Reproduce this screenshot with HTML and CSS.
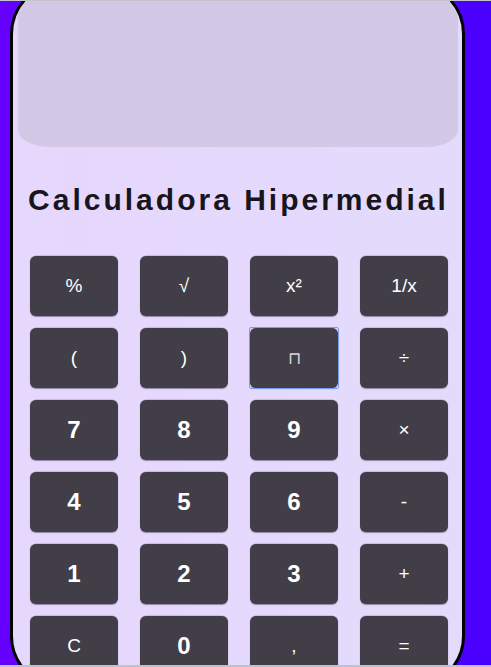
FILE: index.html
```html
<!DOCTYPE html>
<html lang="pt">
<head>
<meta charset="utf-8">
<title>Calculadora Hipermedial</title>
<link rel="stylesheet" href="styles.css">
</head>
<body>
<div class="frame">
  <div class="calc">
    <div class="display"></div>
    <h1 class="title">Calculadora Hipermedial</h1>
    <div class="keys">
      <button class="key op">%</button>
      <button class="key op">√</button>
      <button class="key op">x²</button>
      <button class="key op">1/x</button>
      <button class="key op">(</button>
      <button class="key op">)</button>
      <button class="key op thin focused">⊓</button>
      <button class="key op">÷</button>
      <button class="key num">7</button>
      <button class="key num">8</button>
      <button class="key num">9</button>
      <button class="key op">×</button>
      <button class="key num">4</button>
      <button class="key num">5</button>
      <button class="key num">6</button>
      <button class="key op">-</button>
      <button class="key num">1</button>
      <button class="key num">2</button>
      <button class="key num">3</button>
      <button class="key op">+</button>
      <button class="key op">C</button>
      <button class="key num">0</button>
      <button class="key op">,</button>
      <button class="key op">=</button>
    </div>
  </div>
</div>
</body>
</html>
```
FILE: styles.css
```css
html, body {
  margin: 0;
  padding: 0;
}
body {
  background: linear-gradient(90deg, #6600ff 0%, #4a00ff 100%);
  font-family: "Liberation Sans", Arial, sans-serif;
}
.frame {
  height: 667px;
  box-sizing: border-box;
  border-top: 1px solid #c4c4c8;
  border-bottom: 2px solid #bac4ce;
  overflow: hidden;
}
.calc {
  margin: -19px 0 0 10px;
  width: 455px;
  height: 706px;
  box-sizing: border-box;
  border: 3px solid #000;
  border-radius: 52px;
  background: linear-gradient(90deg, #e6d7fc 0%, #e3dbfc 100%);
  overflow: hidden;
  display: flex;
  flex-direction: column;
}
.display {
  height: 162px;
  flex: none;
  margin: 0 4px 0 5px;
  background: #d3c8e6;
  border-radius: 0 0 32px 32px / 0 0 17px 17px;
}
.title {
  margin: 38px 0 0 0;
  padding-left: 2px;
  height: 30px;
  line-height: 30px;
  text-align: center;
  font-size: 30px;
  font-weight: bold;
  letter-spacing: 3px;
  white-space: nowrap;
  color: #18161c;
}
.keys {
  margin-top: 41px;
  padding-left: 17px;
  display: grid;
  grid-template-columns: repeat(4, 88px);
  grid-auto-rows: 60px;
  column-gap: 22px;
  row-gap: 12px;
}
.key {
  position: relative;
  border: none;
  border-radius: 6px;
  background: #423e48;
  color: #fff;
  font-family: "Liberation Sans", Arial, sans-serif;
  padding: 0;
  box-shadow: 0 1px 1px rgba(40, 30, 60, 0.45), 0 -0.5px 0.5px rgba(40, 30, 60, 0.3);
}
.num {
  font-size: 24px;
  font-weight: bold;
}
.op {
  font-size: 19px;
}
.thin {
  font-family: "DejaVu Sans", sans-serif;
  font-size: 17px;
  font-weight: 200;
  color: #d8d8d8;
}
.focused::after {
  content: "";
  position: absolute;
  inset: -1px;
  border: 1.5px solid #789bf3;
  border-radius: 2px;
}
```
